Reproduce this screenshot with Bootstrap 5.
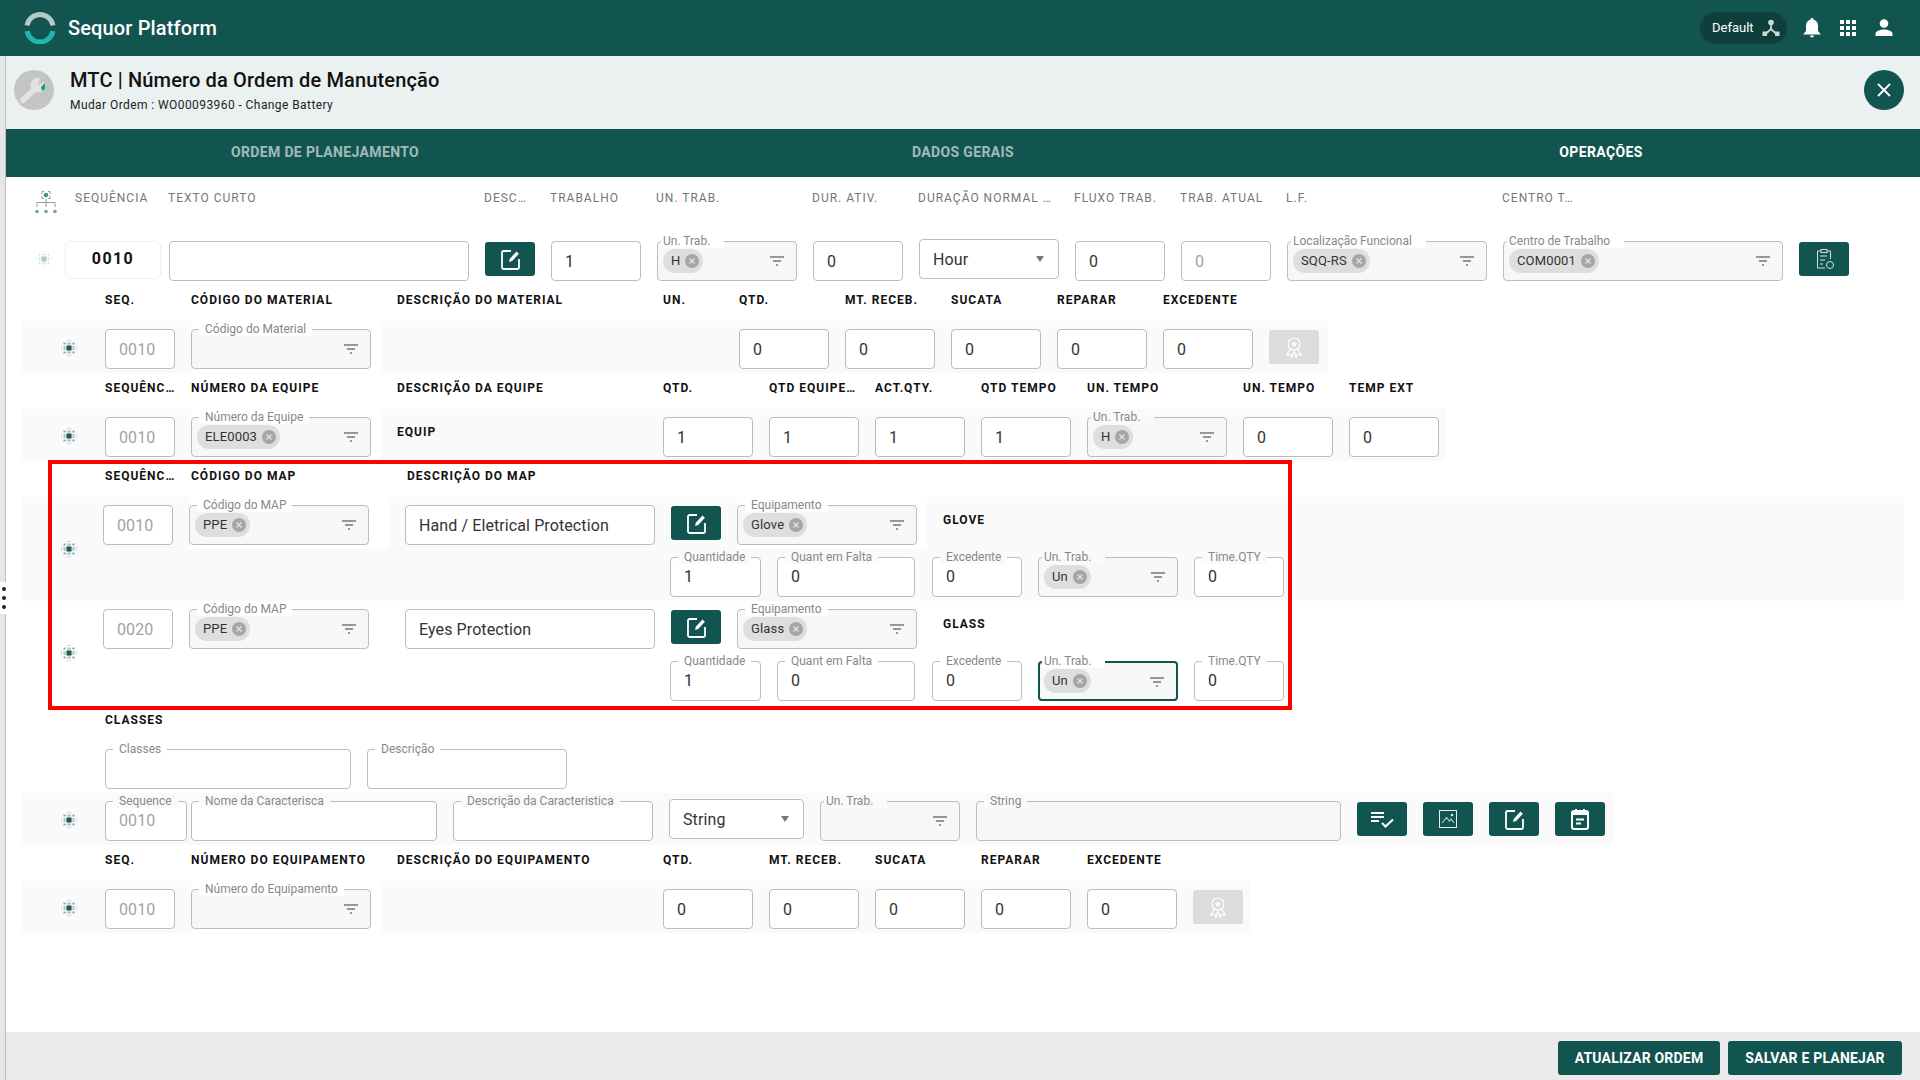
<!DOCTYPE html>
<html lang="pt-BR">
<head>
<meta charset="utf-8">
<title>Sequor Platform</title>
<link href="https://cdn.jsdelivr.net/npm/bootstrap@5.3.0/dist/css/bootstrap.min.css" rel="stylesheet">
<style>
:root{--brand:#12544f;}
html,body{height:100%;}
body{font-family:Roboto,"Liberation Sans",sans-serif;color:#212121;background:#fff;width:1920px;height:1080px;overflow:hidden;position:relative;--nb:#fff;}
.topbar{height:56px;background:var(--brand);color:#fff;padding-left:24px;padding-right:26px;}
.brand-name{font-size:20px;font-weight:500;margin-left:12px;line-height:1;letter-spacing:.15px;}
.env-pill{width:87px;height:32px;background:#0f3f3b;border-radius:16px;padding-left:12px;font-size:13px;margin-right:15px;}
.top-ico{width:20px;height:20px;margin-left:16px;fill:#fff;display:block;}
.top-ico:first-of-type{margin-left:0;}
.strip{width:6px;background:#e6e6e6;border-right:1px solid #bdbdbd;position:relative;flex:none;}
.strip-handle{position:absolute;left:0;top:526px;width:6px;height:32px;background:#fff;}
.strip-handle i{position:absolute;left:2px;width:4px;height:4px;border-radius:50%;background:#222;}
.strip-handle i:nth-child(1){top:5px}.strip-handle i:nth-child(2){top:14px}.strip-handle i:nth-child(3){top:23px}
.mainc{width:1914px;height:1024px;}
.subhead{height:73px;background:#ebf0f0;padding:0 16px 6px 8px;flex:none;}
.subhead-txt{margin-left:16px;}
.title-t{font-size:20px;font-weight:500;line-height:24px;color:#111;margin:0;letter-spacing:.15px;}
.sub-t{font-size:12px;line-height:14px;margin-top:6px;letter-spacing:.42px;color:#222;}
.closebtn{width:40px;height:40px;border-radius:50%;background:var(--brand);border:0;padding:0;}
.tabbar{height:48px;background:var(--brand);flex:none;}
.tabi{width:638px;text-align:center;line-height:47px;font-size:14px;font-weight:700;color:rgba(255,255,255,.62);letter-spacing:.35px;}
.tabi.on{color:#fff;}
.workarea{flex:1 1 auto;overflow:hidden;}
.colhead{height:40px;margin-left:28px;font-size:12px;color:#767676;letter-spacing:1px;white-space:nowrap;}
.colhead>div{padding-top:1px;}
.colhead span{display:block;}
.tree-ico{width:24px;height:24px;margin-right:17px;margin-top:9px;}
.row1{height:46px;margin-top:22px;margin-left:30px;}
.sec-head{height:36px;line-height:30px;margin-left:99px;font-size:12px;font-weight:700;letter-spacing:1px;color:#111;white-space:nowrap;}
.sec-head>span{display:block;}
.band{height:52px;margin-left:16px;padding-top:8px;background:#fafafa;--nb:#fafafa;}
.band.plain{background:#fff;--nb:#fff;}
.band-tall{height:104px;width:1882px;}
.end-mat{width:1306px;}.end-team{width:1424px;}.end-char{width:1591px;}.end-eq{width:1228px;}
.gripw{width:16px;height:16px;margin-left:39px;margin-right:28px;margin-top:11px;flex:none;}
.gripw.tight{margin-right:26px;margin-top:-8px;}
.grip-top{width:16px;height:16px;margin-top:12px;margin-right:13px;opacity:.35;flex:none;}
.whitecell{background:#fff;--nb:#fff;height:52px;margin-top:-8px;padding-top:8px;flex:none;}
.pad10{padding-right:10px;}.pad20{padding-right:20px;}
.fld{position:relative;height:40px;border:1px solid #bcbcbc;border-radius:4px;background:#fff;display:flex;align-items:center;flex:none;}
.fld-sel{background:#f7f7f7;padding-left:5px;}
.fld-focus{border:2px solid var(--brand);padding-left:4px;}
.string-sel{margin-top:-2px;background:#fff;}
.flab{position:absolute;top:-8px;left:7px;padding:0 6px;font-size:12px;line-height:14px;color:#888;background:var(--nb);white-space:nowrap;}
.flab.edge{left:3px;padding:0 14px 0 2px;}
.fld-focus .flab{top:-9px;left:2px;}
.fval{padding-left:13px;font-size:16px;color:#333;letter-spacing:.1px;}
.fval.dim{color:#a3a3a3;}
.fval.low{padding-top:2px;}
.form-control.tinput{height:40px;border:1px solid #bcbcbc;border-radius:4px;padding:0 13px;font-size:16px;letter-spacing:.1px;color:#333;background:#fff;box-shadow:none;flex:none;}
.form-control.tinput.muted-seq{color:#a3a3a3;}
.chp{display:inline-flex;align-items:center;height:24px;border-radius:12px;background:#dedede;padding:0 4px 0 8px;font-size:13px;color:#333;letter-spacing:.15px;}
.chp svg{width:14px;height:14px;margin-left:5px;}
.ficon{width:14px;height:10px;position:absolute;right:12px;top:14px;stroke:#777;fill:none;}
.caret-d{position:absolute;right:14px;top:16px;width:0;height:0;border-left:4.5px solid transparent;border-right:4.5px solid transparent;border-top:6px solid #777;}
.seq-main{width:96px;height:38px;margin-top:2px;margin-right:8px;border:1px solid #f0f0f0;border-radius:5px;font-size:16px;font-weight:700;letter-spacing:1.4px;color:#111;text-align:center;line-height:33px;flex:none;box-shadow:0 0 2px rgba(0,0,0,.05);}
.act-btn{width:50px;height:34px;padding:0;border:0;border-radius:3px;background:var(--brand);display:flex;align-items:center;justify-content:center;flex:none;margin-top:1px;}
.act-btn svg{width:24px;height:24px;}
.act-btn.off{background:#dcdcdc;}
.mtop2{margin-top:2px;}
.mtop3{margin-top:3px;}
.note-b{font-size:12px;font-weight:700;letter-spacing:1px;color:#111;line-height:30px;white-space:nowrap;}
.wd-50{width:50px}.wd-60{width:60px}.wd-70{width:70px}.wd-72{width:72px}.wd-77{width:77px}.wd-82{width:82px}.wd-90{width:90px}.wd-91{width:91px}.wd-135{width:135px}.wd-138{width:138px}.wd-140{width:140px}.wd-180{width:180px}.wd-190{width:190px}.wd-200{width:200px}.wd-246{width:246px}.wd-250{width:250px}.wd-280{width:280px}.wd-300{width:300px}.wd-365{width:365px}
.gap-fix{margin-right:1px;}
.line2{margin-top:8px;margin-left:-1px;}
.right-col{flex:none;}
.map-fl{height:44px;}
.cls-row{margin-left:99px;margin-top:8px;height:44px;}
.footbar{height:48px;background:#ebebeb;padding:4px 18px 0 0;gap:8px;flex:none;}
.foot-btn{height:34px;border:0;border-radius:3px;background:var(--brand);color:#fff;font-size:14px;font-weight:700;letter-spacing:.2px;padding:0;}
.fb1{width:162px}.fb2{width:174px}
.redbox{position:absolute;left:48px;top:460px;width:1244px;height:250px;border:4px solid #ff0000;pointer-events:none;}
</style>
</head>
<body>
<svg width="0" height="0" class="position-absolute">
<defs>
<symbol id="i-grip" viewBox="0 0 16 16">
  <g fill="#7da3a0"><rect x="2.500" y="2.500" width="2" height="2"/><rect x="11.500" y="2.500" width="2" height="2"/><rect x="2.500" y="11.500" width="2" height="2"/><rect x="11.500" y="11.500" width="2" height="2"/></g>
  <g fill="#a9c3c0"><rect x="6.500" y="0" width="1" height="1"/><rect x="8.500" y="0" width="1" height="1"/><rect x="6.500" y="15" width="1" height="1"/><rect x="8.500" y="15" width="1" height="1"/><rect x="0" y="6.500" width="1" height="1"/><rect x="0" y="8.500" width="1" height="1"/><rect x="15" y="6.500" width="1" height="1"/><rect x="15" y="8.500" width="1" height="1"/></g>
  <g fill="#5f908c"><rect x="6.500" y="2.500" width="1" height="2"/><rect x="8.500" y="2.500" width="1" height="2"/><rect x="6.500" y="11.500" width="1" height="2"/><rect x="8.500" y="11.500" width="1" height="2"/><rect x="2.500" y="6.500" width="2" height="1"/><rect x="2.500" y="8.500" width="2" height="1"/><rect x="11.500" y="6.500" width="2" height="1"/><rect x="11.500" y="8.500" width="2" height="1"/></g>
  <path d="M5.500 5.500h5v5h-5z" fill="#3f7a75"/><path d="M5.500 6.500h5v1h-5zM5.500 8.500h5v1h-5zM6.500 5.500h1v5h-1zM8.500 5.500h1v5h-1z" fill="#12544f"/>
</symbol>
<symbol id="i-filter" viewBox="0 0 14 10"><path d="M0 1h14M3 5h8M6 9h2" stroke-width="1.4"/></symbol>
<symbol id="i-x" viewBox="0 0 14 14"><circle cx="7" cy="7" r="7" fill="#a6a6a6"/><path d="M4.500 4.500l5 5M9.500 4.500l-5 5" stroke="#e4e4e4" stroke-width="1.2"/></symbol>
<symbol id="i-edit" viewBox="0 0 24 24"><path d="M13 4H5.500A1.500 1.500 0 0 0 4 5.500v15A1.500 1.500 0 0 0 5.500 22h14a1.500 1.500 0 0 0 1.500-1.500V12" fill="none" stroke="#fff" stroke-width="1.800"/><path d="M11 15l.8-3.200 6.700-7.300 2.400 2.200-6.700 7.300z" fill="#fff"/></symbol>
<symbol id="i-clip" viewBox="0 0 24 24"><path d="M9 4H5.500v17H13M15 4h3.500v8" fill="none" stroke="#cfe0de" stroke-width="1"/><rect x="9" y="2.500" width="6" height="3" fill="none" stroke="#cfe0de"/><path d="M8 9h7M8 13h5M8 17h3" stroke="#cfe0de"/><circle cx="18" cy="18" r="3.500" fill="none" stroke="#cfe0de"/></symbol>
<symbol id="i-list" viewBox="0 0 24 24"><path d="M1 6h13M1 10h13M1 14h8" stroke="#fff" stroke-width="2" fill="none"/><path d="M12 16l3.500 3.500 7.500-7" stroke="#fff" stroke-width="2" fill="none"/></symbol>
<symbol id="i-img" viewBox="0 0 24 24"><rect x="3.500" y="3.500" width="17" height="17" fill="none" stroke="#e8efee" stroke-width="1"/><path d="M6 16l4.500-5.500 3 3.500 1.500-2 3 4" fill="none" stroke="#b9cdcb" stroke-width="1.100"/><circle cx="16" cy="8" r="1.300" fill="#dfe9e8"/></symbol>
<symbol id="i-cal" viewBox="0 0 24 24"><rect x="4" y="4" width="16" height="18" rx="2" fill="none" stroke="#fff" stroke-width="2"/><path d="M8 2v3M16 2v3" stroke="#fff" stroke-width="2"/><path d="M4 5h16v3H4z" fill="#fff"/><path d="M8 12.500h8M8 16.500h5" stroke="#fff" stroke-width="1.800"/></symbol>
<symbol id="i-award" viewBox="0 0 24 24"><circle cx="12" cy="9" r="6" fill="none" stroke="#fff" stroke-width="1.200"/><path d="M8 14l-3 6 3.500-.5L10 22l2-6 2 6 1.500-2.500L19 20l-3-6" fill="none" stroke="#fff" stroke-width="1.200"/><path d="M12 6l1 2 2 .3-1.500 1.500.4 2-1.900-1-1.900 1 .4-2L9 8.300l2-.3z" fill="#fff"/></symbol>
</defs>
</svg>

<header class="topbar d-flex align-items-center">
  <svg width="32" height="32" viewBox="0 0 32 32" class="flex-none"><path d="M3 13.500A13.200 13.200 0 0 1 29 13.500" fill="none" stroke="#b5c9c6" stroke-width="5"/><path d="M3 19A13.200 13.200 0 0 0 29 19" fill="none" stroke="#1fb6ab" stroke-width="5"/></svg>
  <span class="brand-name">Sequor Platform</span>
  <div class="ms-auto d-flex align-items-center">
    <div class="env-pill d-flex align-items-center"><span>Default</span>
      <svg width="18" height="18" viewBox="0 0 18 18" class="ms-2"><circle cx="9" cy="3.500" r="2.800" fill="#cfd8d7"/><path d="M9 5v5L3.500 15M9 10l5.500 5" fill="none" stroke="#cfd8d7" stroke-width="1.800"/><rect x="0.500" y="12.500" width="4.500" height="4.500" fill="#cfd8d7"/><rect x="13" y="12.500" width="4.500" height="4.500" fill="#cfd8d7"/></svg>
    </div>
    <svg class="top-ico" viewBox="0 0 20 20"><path d="M10 0a1.500 1.500 0 0 1 1.500 1.600C14.500 2.400 16 5 16 8v5l2.500 3v.5h-17V16L4 13V8c0-3 1.500-5.600 4.500-6.400A1.500 1.500 0 0 1 10 0zM8 17.500h4a2 2 0 0 1-4 0z"/></svg>
    <svg class="top-ico" viewBox="0 0 20 20"><path d="M2 2h4v4H2zM8 2h4v4H8zM14 2h4v4h-4zM2 8h4v4H2zM8 8h4v4H8zM14 8h4v4h-4zM2 14h4v4H2zM8 14h4v4H8zM14 14h4v4h-4z"/></svg>
    <svg class="top-ico" viewBox="0 0 20 20"><circle cx="10" cy="5.500" r="4.300"/><path d="M1.500 18v-2c0-3 4.500-4.500 8.500-4.500s8.500 1.500 8.500 4.500v2z"/></svg>
  </div>
</header>

<div class="d-flex">
<aside class="strip"><div class="strip-handle"><i></i><i></i><i></i></div></aside>
<main class="mainc d-flex flex-column">

  <div class="subhead d-flex align-items-center">
    <svg width="40" height="40" viewBox="0 0 40 40" class="flex-none"><circle cx="20" cy="20" r="20" fill="#c4c4c4"/><path d="M9 30l13-12" stroke="#e2e2e2" stroke-width="6" stroke-linecap="round"/><circle cx="24" cy="15" r="7.500" fill="#e2e2e2"/><path d="M24 15l3-9 8 4z" fill="#c4c4c4"/><path d="M27 17l4-4v6l-3 2z" fill="#12a184"/></svg>
    <div class="subhead-txt">
      <h1 class="title-t">MTC | Número da Ordem de Manutenção</h1>
      <div class="sub-t">Mudar Ordem : WO00093960 - Change Battery</div>
    </div>
    <button class="closebtn ms-auto d-flex align-items-center justify-content-center" aria-label="Fechar"><svg width="14" height="14" viewBox="0 0 14 14"><path d="M1 1l12 12M13 1L1 13" stroke="#fff" stroke-width="1.800"/></svg></button>
  </div>

  <nav class="tabbar d-flex">
    <div class="tabi">ORDEM DE PLANEJAMENTO</div>
    <div class="tabi">DADOS GERAIS</div>
    <div class="tabi on">OPERAÇÕES</div>
  </nav>

  <section class="workarea">
    <div class="colhead d-flex align-items-center">
      <svg class="tree-ico" viewBox="0 0 24 24"><circle cx="12" cy="5" r="2.300" fill="#3f9a8c"/><path d="M8 4V1.500h2M16 4V1.500h-2M8 6v2.500h2M16 6v2.500h-2M12 9v3M3 17v-4.500h18V17M12 12v5" fill="none" stroke="#999" stroke-width="1"/><circle cx="3" cy="21.500" r="1.800" fill="#6ea59f"/><circle cx="12" cy="21.500" r="1.800" fill="#6ea59f"/><circle cx="21" cy="21.500" r="1.800" fill="#6ea59f"/></svg>
      <div class="d-flex gap-3">
        <span class="wd-77">SEQUÊNCIA</span><span class="wd-300">TEXTO CURTO</span><span class="wd-50">DESC…</span><span class="wd-90">TRABALHO</span><span class="wd-140">UN. TRAB.</span><span class="wd-90">DUR. ATIV.</span><span class="wd-140">DURAÇÃO NORMAL …</span><span class="wd-90">FLUXO TRAB.</span><span class="wd-90">TRAB. ATUAL</span><span class="wd-200">L.F.</span><span class="wd-72">CENTRO T…</span>
      </div>
    </div>

    <div class="row1 d-flex">
      <svg class="grip-top"><use href="#i-grip"/></svg>
      <div class="seq-main">0010</div>
      <div class="d-flex gap-3">
        <input class="form-control tinput wd-300 mtop2" value="" aria-label="Texto curto">
        <button class="act-btn mtop3" aria-label="Editar"><svg><use href="#i-edit"/></svg></button>
        <input class="form-control tinput wd-90 mtop2" value="1" aria-label="Trabalho">
        <div class="fld fld-sel wd-140 mtop2"><span class="flab edge">Un. Trab.</span><span class="chp">H<svg><use href="#i-x"/></svg></span><svg class="ficon"><use href="#i-filter"/></svg></div>
        <input class="form-control tinput wd-90 mtop2" value="0" aria-label="Dur. ativ.">
        <div class="fld wd-140"><span class="fval low">Hour</span><i class="caret-d"></i></div>
        <input class="form-control tinput wd-90 mtop2" value="0" aria-label="Fluxo trab.">
        <input class="form-control tinput muted-seq wd-90 mtop2" value="0" aria-label="Trab. atual">
        <div class="fld fld-sel wd-200 mtop2"><span class="flab edge">Localização Funcional</span><span class="chp">SQQ-RS<svg><use href="#i-x"/></svg></span><svg class="ficon"><use href="#i-filter"/></svg></div>
        <div class="fld fld-sel wd-280 mtop2"><span class="flab edge">Centro de Trabalho</span><span class="chp">COM0001<svg><use href="#i-x"/></svg></span><svg class="ficon"><use href="#i-filter"/></svg></div>
        <button class="act-btn mtop3" aria-label="Lista"><svg><use href="#i-clip"/></svg></button>
      </div>
    </div>

    <div class="sec-head d-flex gap-3"><span class="wd-70">SEQ.</span><span class="wd-190">CÓDIGO DO MATERIAL</span><span class="wd-250">DESCRIÇÃO DO MATERIAL</span><span class="wd-60">UN.</span><span class="wd-90">QTD.</span><span class="wd-90">MT. RECEB.</span><span class="wd-90">SUCATA</span><span class="wd-90">REPARAR</span><span class="wd-90">EXCEDENTE</span></div>
    <div class="band end-mat d-flex">
      <svg class="gripw"><use href="#i-grip"/></svg>
      <div class="d-flex gap-3">
        <input class="form-control tinput muted-seq wd-70" value="0010" aria-label="Seq">
        <div class="whitecell pad10"><div class="fld fld-sel wd-180"><span class="flab">Código do Material</span><svg class="ficon"><use href="#i-filter"/></svg></div></div>
        <div class="wd-250"></div>
        <div class="wd-60"></div>
        <input class="form-control tinput wd-90" value="0" aria-label="Qtd">
        <input class="form-control tinput wd-90" value="0" aria-label="Mt. receb.">
        <input class="form-control tinput wd-90" value="0" aria-label="Sucata">
        <input class="form-control tinput wd-90" value="0" aria-label="Reparar">
        <input class="form-control tinput wd-90" value="0" aria-label="Excedente">
        <button class="act-btn off" aria-label="Certificado"><svg><use href="#i-award"/></svg></button>
      </div>
    </div>

    <div class="sec-head d-flex gap-3"><span class="wd-70">SEQUÊNC…</span><span class="wd-190">NÚMERO DA EQUIPE</span><span class="wd-250">DESCRIÇÃO DA EQUIPE</span><span class="wd-90">QTD.</span><span class="wd-90">QTD EQUIPE…</span><span class="wd-90">ACT.QTY.</span><span class="wd-90">QTD TEMPO</span><span class="wd-140">UN. TEMPO</span><span class="wd-90">UN. TEMPO</span><span class="wd-90">TEMP EXT</span></div>
    <div class="band end-team d-flex">
      <svg class="gripw"><use href="#i-grip"/></svg>
      <div class="d-flex gap-3">
        <input class="form-control tinput muted-seq wd-70" value="0010" aria-label="Seq">
        <div class="whitecell pad10"><div class="fld fld-sel wd-180"><span class="flab">Número da Equipe</span><span class="chp">ELE0003<svg><use href="#i-x"/></svg></span><svg class="ficon"><use href="#i-filter"/></svg></div></div>
        <div class="wd-250 note-b">EQUIP</div>
        <input class="form-control tinput wd-90" value="1" aria-label="Qtd">
        <input class="form-control tinput wd-90" value="1" aria-label="Qtd equipe">
        <input class="form-control tinput wd-90" value="1" aria-label="Act qty">
        <input class="form-control tinput wd-90" value="1" aria-label="Qtd tempo">
        <div class="fld fld-sel wd-140"><span class="flab edge">Un. Trab.</span><span class="chp">H<svg><use href="#i-x"/></svg></span><svg class="ficon"><use href="#i-filter"/></svg></div>
        <input class="form-control tinput wd-90" value="0" aria-label="Un. tempo">
        <input class="form-control tinput wd-90" value="0" aria-label="Temp ext">
      </div>
    </div>

    <div class="sec-head d-flex gap-3"><span class="wd-70">SEQUÊNC…</span><span class="wd-200">CÓDIGO DO MAP</span><span class="wd-250">DESCRIÇÃO DO MAP</span></div>

    <div class="band band-tall d-flex">
      <svg class="gripw tight align-self-center"><use href="#i-grip"/></svg>
      <div class="d-flex gap-3">
        <input class="form-control tinput muted-seq wd-70" value="0010" aria-label="Seq">
        <div class="whitecell pad20"><div class="fld fld-sel wd-180"><span class="flab">Código do MAP</span><span class="chp">PPE<svg><use href="#i-x"/></svg></span><svg class="ficon"><use href="#i-filter"/></svg></div></div>
        <input class="form-control tinput wd-250" value="Hand / Eletrical Protection" aria-label="Descrição">
        <div class="right-col">
          <div class="d-flex gap-3 map-fl">
            <button class="act-btn" aria-label="Editar"><svg><use href="#i-edit"/></svg></button>
            <div class="whitecell pad10"><div class="fld fld-sel wd-180"><span class="flab">Equipamento</span><span class="chp">Glove<svg><use href="#i-x"/></svg></span><svg class="ficon"><use href="#i-filter"/></svg></div></div>
            <div class="note-b">GLOVE</div>
          </div>
          <div class="d-flex gap-3 line2">
            <div class="fld wd-91"><span class="flab">Quantidade</span><span class="fval">1</span></div>
            <div class="fld wd-138 gap-fix"><span class="flab">Quant em Falta</span><span class="fval">0</span></div>
            <div class="fld wd-90"><span class="flab">Excedente</span><span class="fval">0</span></div>
            <div class="fld fld-sel wd-140"><span class="flab edge">Un. Trab.</span><span class="chp">Un<svg><use href="#i-x"/></svg></span><svg class="ficon"><use href="#i-filter"/></svg></div>
            <div class="fld wd-90"><span class="flab">Time.QTY</span><span class="fval">0</span></div>
          </div>
        </div>
      </div>
    </div>

    <div class="band plain band-tall d-flex">
      <svg class="gripw tight align-self-center"><use href="#i-grip"/></svg>
      <div class="d-flex gap-3">
        <input class="form-control tinput muted-seq wd-70" value="0020" aria-label="Seq">
        <div class="whitecell pad20"><div class="fld fld-sel wd-180"><span class="flab">Código do MAP</span><span class="chp">PPE<svg><use href="#i-x"/></svg></span><svg class="ficon"><use href="#i-filter"/></svg></div></div>
        <input class="form-control tinput wd-250" value="Eyes Protection" aria-label="Descrição">
        <div class="right-col">
          <div class="d-flex gap-3 map-fl">
            <button class="act-btn" aria-label="Editar"><svg><use href="#i-edit"/></svg></button>
            <div class="whitecell pad10"><div class="fld fld-sel wd-180"><span class="flab">Equipamento</span><span class="chp">Glass<svg><use href="#i-x"/></svg></span><svg class="ficon"><use href="#i-filter"/></svg></div></div>
            <div class="note-b">GLASS</div>
          </div>
          <div class="d-flex gap-3 line2">
            <div class="fld wd-91"><span class="flab">Quantidade</span><span class="fval">1</span></div>
            <div class="fld wd-138 gap-fix"><span class="flab">Quant em Falta</span><span class="fval">0</span></div>
            <div class="fld wd-90"><span class="flab">Excedente</span><span class="fval">0</span></div>
            <div class="fld fld-sel fld-focus wd-140"><span class="flab edge">Un. Trab.</span><span class="chp">Un<svg><use href="#i-x"/></svg></span><svg class="ficon"><use href="#i-filter"/></svg></div>
            <div class="fld wd-90"><span class="flab">Time.QTY</span><span class="fval">0</span></div>
          </div>
        </div>
      </div>
    </div>

    <div class="sec-head"><span>CLASSES</span></div>
    <div class="cls-row d-flex gap-3">
      <div class="fld wd-246"><span class="flab">Classes</span></div>
      <div class="fld wd-200"><span class="flab">Descrição</span></div>
    </div>

    <div class="band end-char d-flex">
      <svg class="gripw"><use href="#i-grip"/></svg>
      <div class="fld wd-82 me-1"><span class="flab">Sequence</span><span class="fval dim">0010</span></div>
      <div class="d-flex gap-3">
        <div class="fld wd-246"><span class="flab">Nome da Caracterisca</span></div>
        <div class="fld wd-200"><span class="flab">Descrição da Caracteristica</span></div>
        <div class="fld fld-sel wd-135 string-sel"><span class="fval low ps-2">String</span><i class="caret-d"></i></div>
        <div class="fld fld-sel wd-140"><span class="flab edge">Un. Trab.</span><svg class="ficon"><use href="#i-filter"/></svg></div>
        <div class="fld fld-sel wd-365"><span class="flab">String</span></div>
        <button class="act-btn" aria-label="Lista"><svg><use href="#i-list"/></svg></button>
        <button class="act-btn" aria-label="Imagem"><svg><use href="#i-img"/></svg></button>
        <button class="act-btn" aria-label="Editar"><svg><use href="#i-edit"/></svg></button>
        <button class="act-btn" aria-label="Agenda"><svg><use href="#i-cal"/></svg></button>
      </div>
    </div>

    <div class="sec-head d-flex gap-3"><span class="wd-70">SEQ.</span><span class="wd-190">NÚMERO DO EQUIPAMENTO</span><span class="wd-250">DESCRIÇÃO DO EQUIPAMENTO</span><span class="wd-90">QTD.</span><span class="wd-90">MT. RECEB.</span><span class="wd-90">SUCATA</span><span class="wd-90">REPARAR</span><span class="wd-90">EXCEDENTE</span></div>
    <div class="band end-eq d-flex">
      <svg class="gripw"><use href="#i-grip"/></svg>
      <div class="d-flex gap-3">
        <input class="form-control tinput muted-seq wd-70" value="0010" aria-label="Seq">
        <div class="whitecell pad10"><div class="fld fld-sel wd-180"><span class="flab">Número do Equipamento</span><svg class="ficon"><use href="#i-filter"/></svg></div></div>
        <div class="wd-250"></div>
        <input class="form-control tinput wd-90" value="0" aria-label="Qtd">
        <input class="form-control tinput wd-90" value="0" aria-label="Mt. receb.">
        <input class="form-control tinput wd-90" value="0" aria-label="Sucata">
        <input class="form-control tinput wd-90" value="0" aria-label="Reparar">
        <input class="form-control tinput wd-90" value="0" aria-label="Excedente">
        <button class="act-btn off" aria-label="Certificado"><svg><use href="#i-award"/></svg></button>
      </div>
    </div>
  </section>

  <footer class="footbar d-flex align-items-center justify-content-end">
    <button class="foot-btn fb1">ATUALIZAR ORDEM</button>
    <button class="foot-btn fb2">SALVAR E PLANEJAR</button>
  </footer>
</main>
</div>

<div class="redbox"></div>
<script src="https://cdn.jsdelivr.net/npm/bootstrap@5.3.0/dist/js/bootstrap.bundle.min.js"></script>
</body>
</html>
